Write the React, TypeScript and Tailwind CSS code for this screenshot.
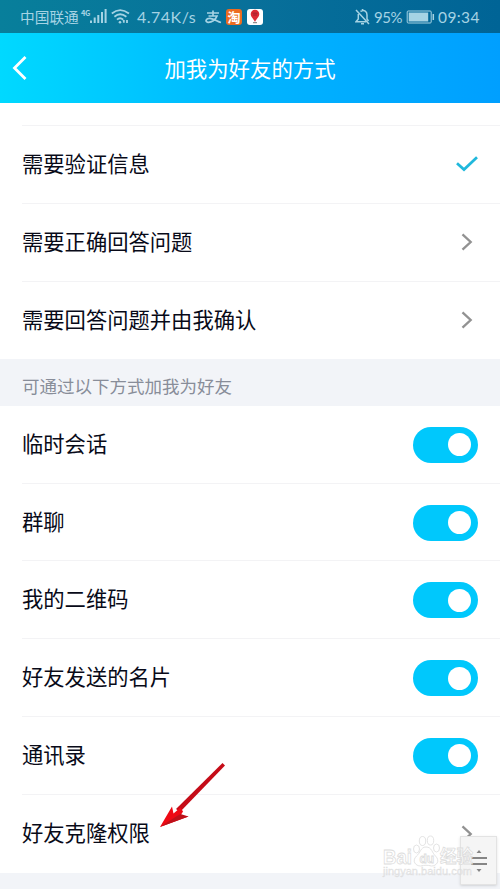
import type { ReactNode } from "react";

function Row({ label, children, last = false }: { label: string; children?: ReactNode; last?: boolean }) {
  return (
    <div className="flex h-[77.8px] shrink-0 pl-[22px]">
      <div className={`flex grow items-center justify-between pr-[22px] ${last ? "" : "border-b border-[#f3f3f5]"}`}>
        <span className="-mt-[3px] text-[21.3px] leading-8 whitespace-nowrap text-[#080a18]">{label}</span>
        {children}
      </div>
    </div>
  );
}

function Chevron() {
  return (
    <svg className="mr-[5px] h-[18px] w-[12px]" viewBox="0 0 12 18" fill="none" stroke="#929292" strokeWidth="2.3">
      <path d="M1.5 1.3 9.7 9 1.5 16.7" />
    </svg>
  );
}

function Toggle() {
  return (
    <div className="mt-px flex h-9 w-[65px] items-center justify-end rounded-full bg-[#00c8fc] pr-[7px]">
      <div className="h-[23px] w-[23px] rounded-full bg-white" />
    </div>
  );
}

function StatusBar() {
  return (
    <div className="flex h-[33px] shrink-0 items-center justify-between bg-linear-to-r from-[#087f9b] via-[#08709a] to-[#006496] pr-[19px] pl-5 text-[#a5d3e4]">
      <div className="flex items-center">
        <span className="w-[59px] text-[14.7px] leading-5 whitespace-nowrap">中国联通</span>
        <span className="mb-2 ml-[2px] w-[9px] text-[7.5px] leading-none font-bold tracking-[-0.5px]">4G</span>
        <svg className="h-[17px] w-[17px]" viewBox="0 0 17 17" fill="currentColor">
          <path d="M0 12.5h2V15H0zM3.7 9.5h2V15h-2zM7.3 7h2v8h-2zM11 4h2v11h-2zM14.6 1h2v14h-2z" />
        </svg>
        <svg className="ml-1 h-[17px] w-[19px]" viewBox="0 0 19 17" fill="none" stroke="currentColor" strokeWidth="1.8">
          <path d="M.8 5.5Q9-1.3 18 5.5M3.4 8.7Q9 3.9 15.4 8.7M6 11.7Q9 8.9 12.2 11.7" />
          <circle cx="9" cy="14.2" r="1.3" fill="currentColor" stroke="none" />
          <path d="M12.8 14.8v-2.8M16 15v-3" />
        </svg>
        <span className="ml-[7px] w-[60px] font-['Lato','Noto_Sans',sans-serif] text-[16px] leading-5 tracking-[0.5px] whitespace-nowrap">4.74K/s</span>
        <svg className="ml-[8px] h-4 w-[17px]" viewBox="0 0 17 16" fill="none" stroke="currentColor" strokeWidth="1.7">
          <path d="M2 4h12M8 1.5V7M3.5 7H12C10.5 11.2 6.5 13.5 3 13.3-.2 12.8.7 9.3 5 9.4 9 9.8 12 12.2 16 13.5" />
        </svg>
        <span className="ml-[4px] flex h-4 w-4 items-center justify-center rounded-[3px] bg-[#ed6c20] text-[13px] leading-none font-bold text-white">淘</span>
        <span className="ml-[5px] flex h-4 w-4 items-center justify-center rounded-[3px] bg-white">
          <svg className="h-[15px] w-[14px]" viewBox="0 0 14 15">
            <path d="M7 13C5.5 9.5 2.7 8 2.7 5a4.3 4.3 0 0 1 8.6 0c0 3-2.8 4.5-4.3 8Z" fill="#dc2935" />
            <path d="M4.5 4.2h5M5 6h4" stroke="#982230" strokeWidth=".9" />
            <path d="M5 13.7h4" stroke="#777" />
          </svg>
        </span>
      </div>
      <div className="flex items-center font-['Lato','Noto_Sans',sans-serif] text-[15.5px] leading-5">
        <svg className="mr-[4px] h-4 w-[15px]" viewBox="0 0 15 16" fill="none" stroke="currentColor" strokeWidth="1.5">
          <path d="M1 1 14 15M3.3 5v5L1 12.7h10M5.5 2.5c4-2.3 6.5.4 6.5 3.5v4l1.5 2M6 14.7h3M7.5 0v1.4" />
        </svg>
        <span className="w-[30px] text-[15px] tracking-[-0.4px]">95%</span>
        <svg className="ml-[2px] h-[14px] w-[30px]" viewBox="0 0 30 14" fill="none" stroke="currentColor">
          <rect x="1.2" y="1" width="24" height="12" rx="1" strokeWidth="1" />
          <path d="M2.7 2.5h19.5v9H2.7z" fill="currentColor" stroke="none" />
          <path d="M27.3 4v6" strokeWidth="1.5" />
        </svg>
        <span className="ml-[2px] w-[43px] tracking-[0.4px]">09:34</span>
      </div>
    </div>
  );
}

function Watermark() {
  return (
    <svg className="absolute top-[832px] left-[380px] h-[50px] w-[104px]" viewBox="0 0 104 50" fill="#fff" fillOpacity=".65" stroke="#dcdcdc" strokeWidth=".8">
      <g fontFamily="Liberation Sans, Noto Sans CJK SC, sans-serif">
        <text x="3" y="32" fontSize="21" fontWeight="bold" textLength="29" lengthAdjust="spacingAndGlyphs">Bai</text>
        <ellipse cx="36.5" cy="17" rx="3" ry="4" />
        <ellipse cx="42.5" cy="9" rx="3.2" ry="4.5" />
        <ellipse cx="50.5" cy="8.5" rx="3.2" ry="4.5" />
        <ellipse cx="56.5" cy="16" rx="3" ry="4" />
        <path d="M46 15c6 0 6 6 9.500 9 5 5 1 10-4 10-4-1-7-1-11 0-5 0-9-5-4-10 4-3 4-9 9.500-9Z" />
        <text x="39.500" y="31" fontSize="12" fontWeight="bold">du</text>
        <text x="60" y="31" fontSize="18" fontWeight="bold" textLength="33" lengthAdjust="spacingAndGlyphs">经验</text>
        <text x="3" y="43" fontSize="10" fill="#e0e0e0" strokeWidth=".3" textLength="89" lengthAdjust="spacingAndGlyphs">jingyan.baidu.com</text>
      </g>
    </svg>
  );
}

export default function App() {
  return (
    <main className="relative flex h-[889px] w-[500px] flex-col overflow-hidden bg-white font-['Noto_Sans_CJK_SC',sans-serif]">
      <StatusBar />
      <header className="grid h-[70px] shrink-0 grid-cols-[60px_1fr_60px] items-center bg-linear-to-r from-[#00d9ff] via-[#00b5ff] to-[#009fff]">
        <svg className="ml-3 h-[26px] w-4" viewBox="0 0 16 26" fill="none" stroke="white" strokeWidth="2.8">
          <path d="M13.500 2 2.500 13 13.500 24" />
        </svg>
        <h1 className="text-center text-[21.4px] leading-8 whitespace-nowrap text-white">加我为好友的方式</h1>
      </header>
      <div className="ml-[22px] h-[23px] shrink-0 border-b border-[#f3f3f5]" />
      <Row label="需要验证信息">
        <svg className="h-4 w-[22px]" viewBox="0 0 22 16" fill="none" stroke="#20b8dc" strokeWidth="2.7">
          <path d="m1 7.2 7 6.4L21 1.2" />
        </svg>
      </Row>
      <Row label="需要正确回答问题"><Chevron /></Row>
      <Row label="需要回答问题并由我确认" last><Chevron /></Row>
      <div className="flex h-[46.5px] shrink-0 items-center bg-[#f2f4f8] pt-[7px] pl-[22px] text-[17.5px] leading-6 text-[#888d99]">可通过以下方式加我为好友</div>
      <Row label="临时会话"><Toggle /></Row>
      <Row label="群聊"><Toggle /></Row>
      <Row label="我的二维码"><Toggle /></Row>
      <Row label="好友发送的名片"><Toggle /></Row>
      <Row label="通讯录"><Toggle /></Row>
      <Row label="好友克隆权限" last><Chevron /></Row>
      <div className="grow bg-[#f2f4f8]" />
      <svg className="absolute top-[760px] left-[158px] h-[70px] w-[70px]" viewBox="0 0 70 70">
        <path d="M64.500 3 67 5.500 22 52l-4-3Z" fill="#c50c18" />
        <path d="M2 67 14 46.500l1.500 7 7-6 2.500 4-2.500 4 8 1Z" fill="#ee0914" />
        <path d="m22.500 54 8 2.500L2 67l17-11Z" fill="#bd1019" />
      </svg>
      <div className="absolute top-[836px] left-[460px] flex h-[49px] w-[37px] items-center justify-center border border-[#e3e3e3] bg-[#f5f5f5] shadow-sm">
        <svg className="h-6 w-4" viewBox="0 0 16 24" fill="#858585">
          <path d="m8 1 2.500 3h-5ZM0 8h16v2H0zM0 14h16v2H0zM5.500 20h5L8 23Z" />
        </svg>
      </div>
      <Watermark />
    </main>
  );
}
